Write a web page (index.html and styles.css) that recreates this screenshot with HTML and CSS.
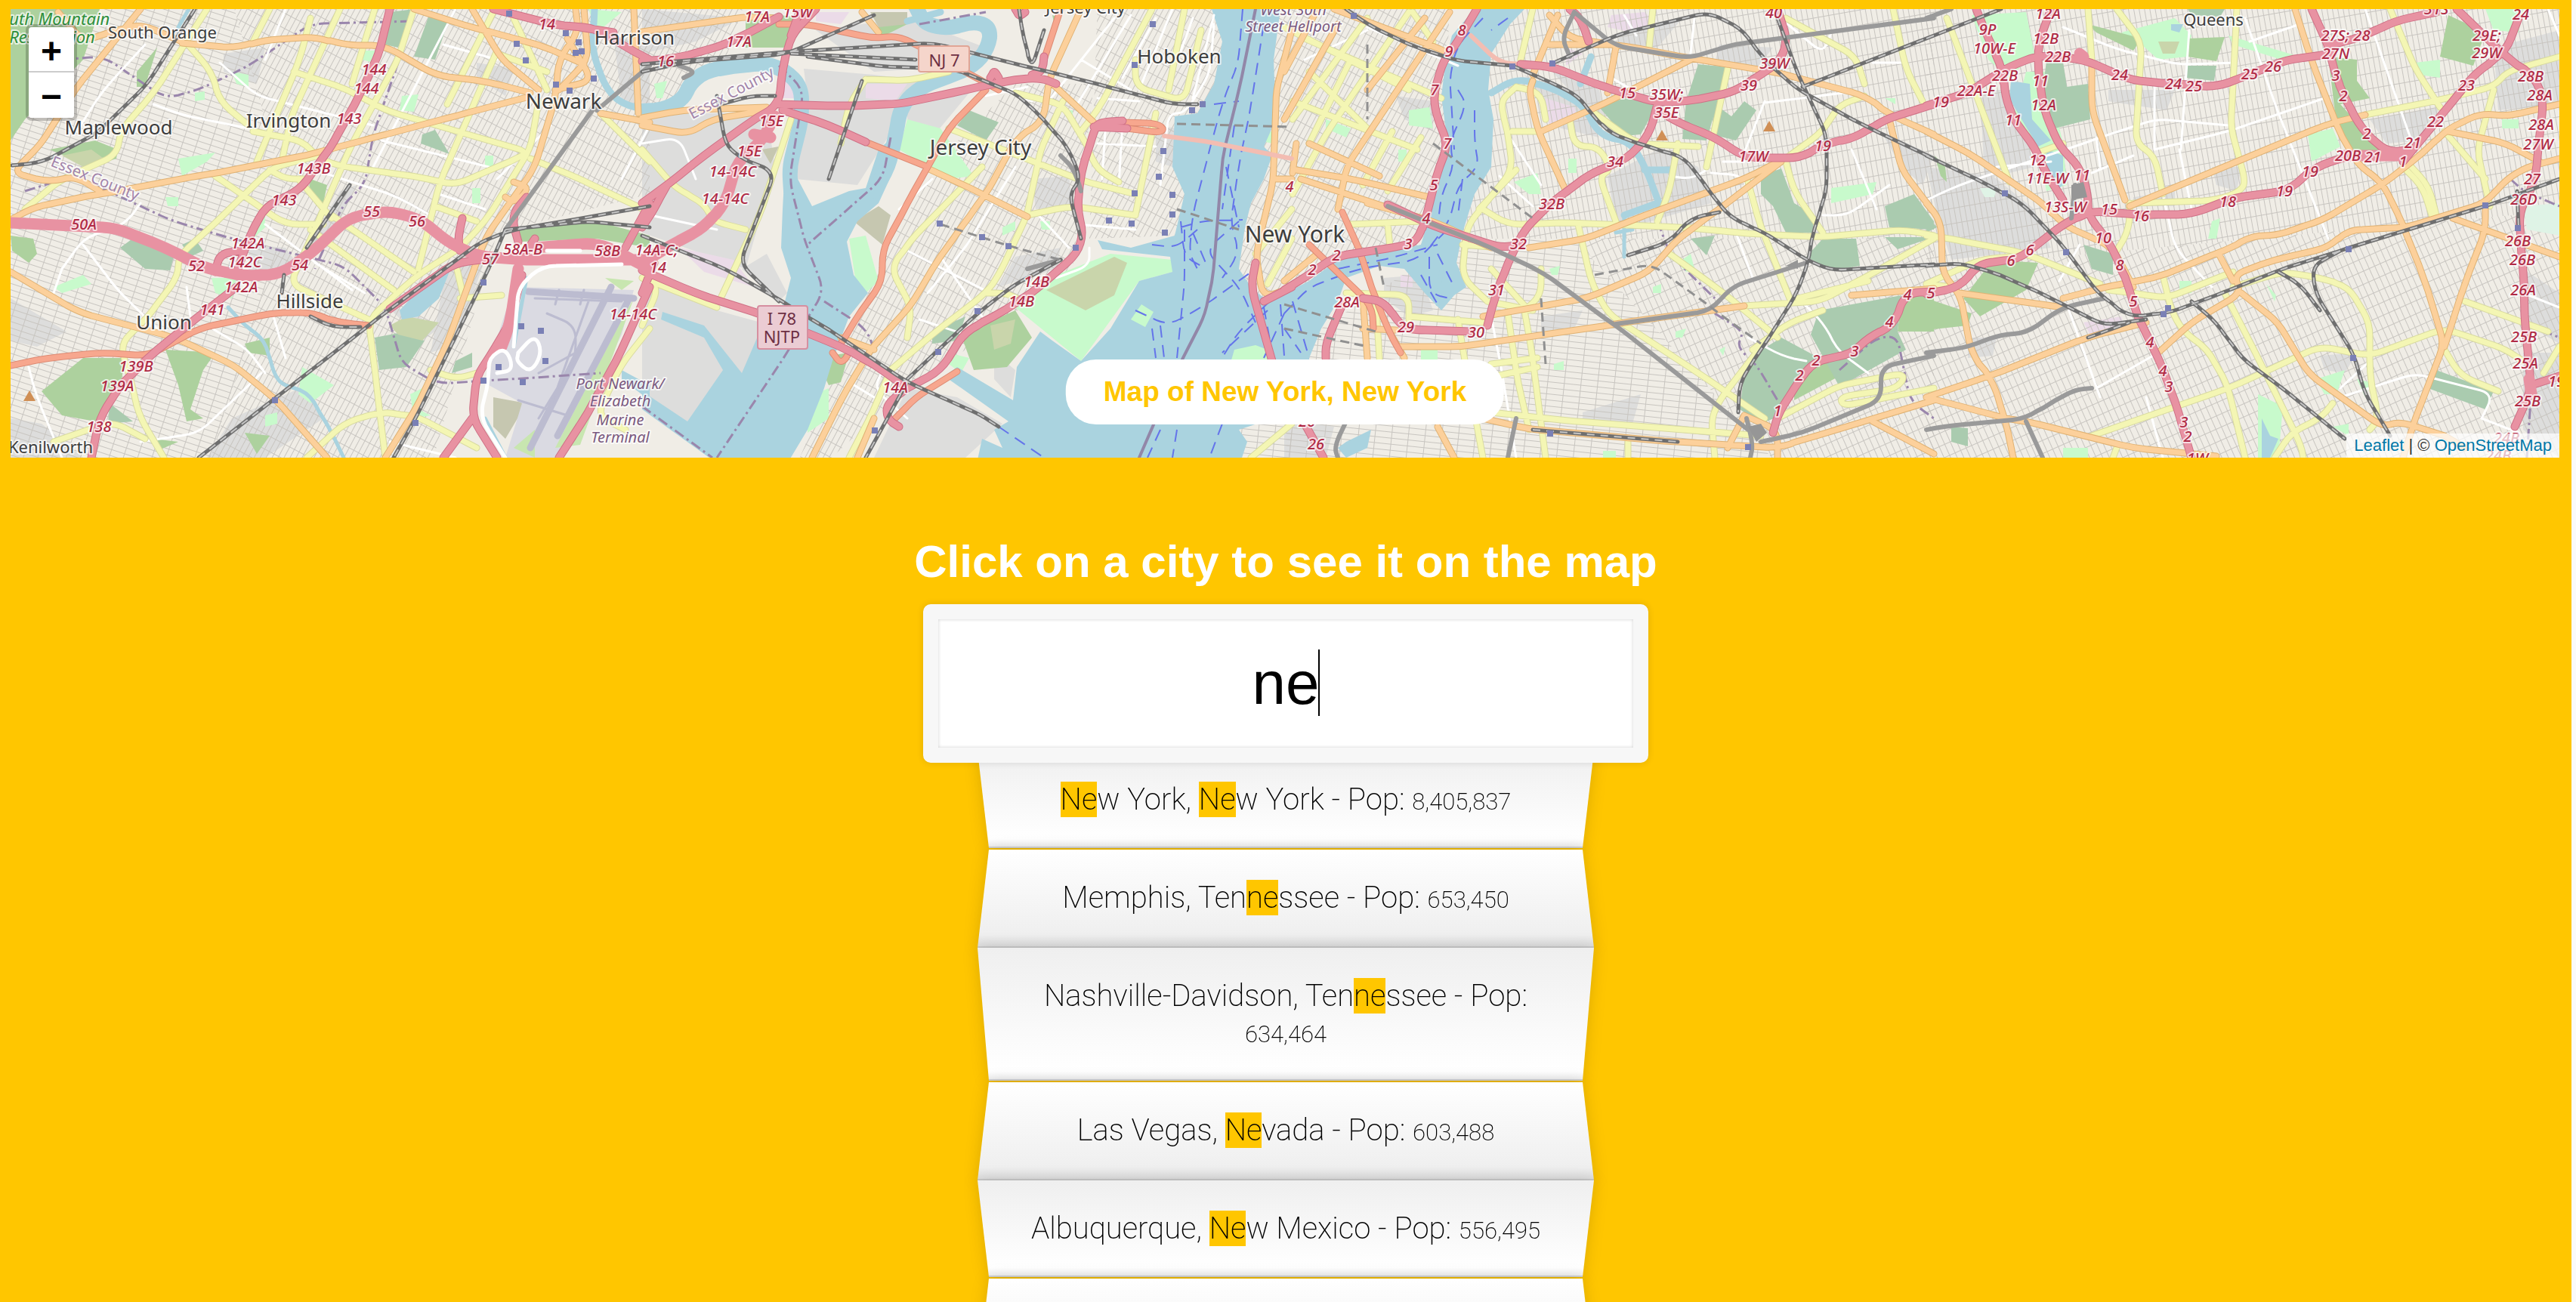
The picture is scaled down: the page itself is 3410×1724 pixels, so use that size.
FILE: index.html
```
<!DOCTYPE html>
<html lang="en">
<head>
<meta charset="utf-8">
<title>City search</title>
<link rel="stylesheet" href="styles.css">
</head>
<body>
<section class="map" aria-label="Map">
  <svg class="map-canvas" viewBox="14 12 3374 594" preserveAspectRatio="xMidYMid slice" aria-hidden="true">
    <defs>
      <pattern id="grid-a" width="18" height="8" patternUnits="userSpaceOnUse" patternTransform="rotate(18)"><path d="M0 0H18M0 0V8" class="street"/></pattern>
      <pattern id="grid-b" width="7" height="18" patternUnits="userSpaceOnUse" patternTransform="rotate(28)"><path d="M0 0H7M0 0V18" class="street"/></pattern>
      <pattern id="grid-c" width="7" height="20" patternUnits="userSpaceOnUse" patternTransform="rotate(-10)"><path d="M0 0H7M0 0V20" class="street"/></pattern>
      <pattern id="grid-d" width="8" height="16" patternUnits="userSpaceOnUse" patternTransform="rotate(-24)"><path d="M0 0H8M0 0V16" class="street"/></pattern>
      <pattern id="grid-e" width="22" height="8" patternUnits="userSpaceOnUse" patternTransform="rotate(6)"><path d="M0 0H22M0 0V8" class="street"/></pattern>
    </defs>
    <g id="map-layers"></g>
  </svg>
  <div class="zoom">
    <button type="button" aria-label="Zoom in">+</button>
    <button type="button" aria-label="Zoom out">−</button>
  </div>
  <p class="map-title">Map of New York, New York</p>
  <p class="attribution"><a href="#leaflet">Leaflet</a> | © <a href="#osm">OpenStreetMap</a></p>
</section>
<main class="search">
  <h1><label for="city">Click on a city to see it on the map</label></h1>
  <div class="field">
    <input id="city" type="text" value="ne" autocomplete="off">
    <span class="caret"></span>
  </div>
  <ul class="suggestions">
    <li><mark>Ne</mark>w York, <mark>Ne</mark>w York - Pop: <span class="pop">8,405,837</span></li>
    <li>Memphis, Ten<mark>ne</mark>ssee - Pop: <span class="pop">653,450</span></li>
    <li>Nashville-Davidson, Ten<mark>ne</mark>ssee - Pop: <span class="pop">634,464</span></li>
    <li>Las Vegas, <mark>Ne</mark>vada - Pop: <span class="pop">603,488</span></li>
    <li>Albuquerque, <mark>Ne</mark>w Mexico - Pop: <span class="pop">556,495</span></li>
    <li></li>
  </ul>
</main>
<script src="map.js"></script>
</body>
</html>
```
FILE: styles.css
```
* { box-sizing: border-box; }
html { background: #fafafa; }
body {
  display: flow-root;
  margin: 0 6px 0 0;
  height: 100vh;
  overflow: hidden;
  background: #ffc600;
  font-family: "Liberation Sans", Arial, sans-serif;
  color: #000;
}
.map {
  position: relative;
  height: 594px;
  margin: 12px 16px 0 14px;
  overflow: hidden;
  background: #e9e6e0;
}
.map-canvas { display: block; width: 100%; height: 100%; }

.zoom {
  position: absolute;
  left: 20px;
  top: 20px;
  display: flex;
  flex-direction: column;
  border: 4px solid rgba(0, 0, 0, .2);
  border-radius: 8px;
  background-clip: padding-box;
}
.zoom button {
  width: 60px;
  height: 60px;
  padding: 4px 0 0;
  border: 0;
  background: #fff;
  color: #000;
  font: bold 48px/56px "Liberation Sans", Arial, sans-serif;
}
.zoom button:first-child { border-bottom: 2px solid #ccc; border-radius: 4px 4px 0 0; }
.zoom button:last-child { border-radius: 0 0 4px 4px; }

.map-title {
  position: absolute;
  left: 50%;
  bottom: 44px;
  transform: translateX(-50%);
  margin: 0;
  padding: 20px 50px;
  border-radius: 40px;
  background: #fff;
  color: #ffc600;
  font-size: 37px;
  line-height: 46px;
  font-weight: bold;
  white-space: nowrap;
}
.attribution {
  position: absolute;
  right: 0;
  bottom: 0;
  margin: 0;
  padding: 0 10px;
  background: rgba(255, 255, 255, .7);
  color: #333;
  font-size: 22px;
  line-height: 32px;
}
.attribution a { color: #0078a8; text-decoration: none; }

.street { fill: none; stroke: #c8c5c0; stroke-width: 2; }
.line { fill: none; stroke-linecap: round; stroke-linejoin: round; }
.label {
  font-family: "Noto Sans", "Open Sans", sans-serif;
  text-anchor: middle;
  paint-order: stroke;
  stroke: rgba(255, 255, 255, .7);
  stroke-width: 4px;
  stroke-linejoin: round;
  fill: #3d3d3d;
}
.label.exit { font-size: 20px; font-style: italic; font-weight: 500; fill: #b02a45; }
.label.capital { font-size: 30px; }
.label.metro { font-size: 28px; }
.label.city { font-size: 26px; }
.label.town { font-size: 22px; }
.label.county { font-size: 20px; fill: #a284aa; }
.label.place { font-size: 20px; font-style: italic; fill: #7b5a80; }
.label.nature { font-size: 22px; font-style: italic; fill: #2f8f3c; }
.label.shield { font-size: 22px; fill: #6d2f43; stroke: none; }

.search {
  display: flex;
  flex-direction: column;
  align-items: center;
}
h1 {
  margin: 102px 0 20px;
  font-size: 60px;
  line-height: 72px;
  font-weight: bold;
  color: #fff;
}
.field {
  position: relative;
  z-index: 2;
  width: 960px;
}
.field input {
  display: block;
  width: 100%;
  height: 210px;
  padding: 40px;
  border: 20px solid #f7f7f7;
  border-radius: 10px;
  background: #fff;
  outline: 0;
  box-shadow: 0 0 10px rgba(0, 0, 0, .12), inset 0 0 4px rgba(0, 0, 0, .19);
  font-family: inherit;
  font-size: 80px;
  text-align: center;
  color: #000;
  caret-color: transparent;
}
.caret {
  position: absolute;
  left: calc(50% + 43px);
  top: 60px;
  width: 2px;
  height: 88px;
  background: #000;
}
.suggestions {
  display: flex;
  flex-direction: column;
  gap: 2px;
  width: 816px;
  margin: -15px 0 0;
  padding: 0;
  list-style: none;
}
.suggestions li {
  position: relative;
  z-index: 0;
  min-height: 128px;
  padding: 40px;
  font-family: Roboto, "Liberation Sans", sans-serif;
  font-size: 40px;
  line-height: 48px;
  font-weight: 200;
  text-align: center;
  filter: drop-shadow(0 0 10px rgba(0, 0, 0, .14));
}
.suggestions li::before {
  content: "";
  position: absolute;
  inset: 0;
  z-index: -1;
  border-bottom: 2px solid #cfcfcf;
  background: linear-gradient(to top, #f0f0f0 0, #fff 10px, #efefef 100%);
  clip-path: polygon(0 0, 100% 0, calc(100% - 15px) 100%, 15px 100%);
}
.suggestions li:nth-child(even)::before {
  bottom: -2px;
  border-bottom-color: #c9c9c9;
  background: linear-gradient(to bottom, #fff 0, #efefef 88%, #dedede 100%);
  clip-path: polygon(15px 0, calc(100% - 15px) 0, 100% 100%, 0 100%);
}
mark { background: #ffc600; color: inherit; }
.pop { font-size: 31px; line-height: 0; }
```
FILE: map.js
```
// The map is digitised on four side-by-side sheets. Each sheet is 1568 units
// square and covers 860 x 620 map units.
const SHEET_X = [0, 850, 1700, 2550];
const UX = 860 / 1568, UY = 620 / 1568;
const out = [];
const toMap = (s, p) => { const [x, y] = p.split(',').map(Number); return [Math.round(SHEET_X[s] + x * UX), Math.round(y * UY)]; };
const points = (s, str) => str.trim().split(/\s+/).map(p => toMap(s, p));

function smooth(pts) {
  let d = 'M' + pts[0];
  for (let i = 1; i < pts.length - 1; i++) {
    const a = pts[i - 1], b = pts[i], c = pts[i + 1];
    const near = (p, q) => { const l = Math.hypot(q[0] - p[0], q[1] - p[1]) || 1, t = Math.min(.5, 18 / l); return [p[0] + (q[0] - p[0]) * t, p[1] + (q[1] - p[1]) * t].map(Math.round); };
    d += 'L' + near(b, a) + 'Q' + b + ' ' + near(b, c);
  }
  return d + 'L' + pts[pts.length - 1];
}
function areas(fill, sheets) {
  sheets.forEach((str, s) => str && str.split('|').forEach(a => out.push(`<path d="M${points(s, a).join('L')}Z" fill="${fill}"/>`)));
}
function lines(styles, sheets) {
  const d = sheets.map((str, s) => str ? str.split('|').map(l => smooth(points(s, l))).join('') : '').join('');
  styles.forEach(([color, width, dash]) => out.push(`<path class="line" d="${d}" stroke="${color}" stroke-width="${width}"${dash ? ` stroke-dasharray="${dash}" style="stroke-linecap:butt"` : ''}/>`));
}

// Land
areas('#f0ede6', ['0,0 1568,0 1568,1568 0,1568', '0,0 1568,0 1568,1568 0,1568', '0,0 1568,0 1568,1568 0,1568', '0,0 1568,0 1568,1568 0,1568']);
areas('#dddddc', [
  '540,180 640,160 620,280 540,240|600,820 690,830 720,890 600,910|1080,880 1170,870 1100,1150 1040,1180|1150,210 1240,230 1220,320 1150,260|560,1400 740,1290 780,1400 640,1532 500,1532|26,1000 160,1110 90,1160 26,1140|820,640 860,620 790,830 740,830|1480,120 1568,150 1568,400 1500,340|26,1400 100,1420 200,1532 26,1532|930,1020 1000,1050 1060,1100 1020,1140',
  '0,940 180,1040 340,1100 240,1260 110,1420 0,1310|390,230 560,250 680,270 520,620 370,600 400,330|0,380 300,380 320,560 250,900 0,780|0,30 240,60 130,140 0,180|420,100 640,60 830,160 780,220 560,240|900,860 1010,830 1000,900 860,960|640,1300 760,1330 870,1420 780,1532 560,1532|940,600 1030,590 1040,690 950,700|300,850 350,980 330,1010 240,900|850,1180 900,1240 890,1330 850,1270|1240,420 1290,430 1280,560 1240,540|640,320 790,310 700,460 640,400|1000,1050 1080,1100 1060,1150',
  '580,250 700,330 760,460 640,420 620,330|780,590 900,500 1000,560 1030,680 860,750 800,740|840,90 960,60 900,160 780,160|240,930 330,920 360,1040 300,1060 240,1000|620,1060 720,1040 700,1100 620,1110|720,1380 860,1320 840,1420 720,1420|0,1400 120,1430 100,1532 0,1532|640,230 760,300 780,440|270,320 360,340 360,440 290,400|1050,150 1180,160 1140,230 1040,210|1440,440 1568,520 1540,620 1490,560',
  '130,300 210,300 260,560 140,600|0,560 160,590 260,700 300,830 60,870 30,740|440,300 600,300 580,370 440,340|1070,400 1240,360 1200,470 1110,480|1370,160 1528,100 1528,350 1380,370|1440,900 1528,980 1528,1150 1440,1080|690,560 760,560 750,640 700,620|500,660 600,640 600,690 500,690|950,1190 1040,1180 1010,1250 960,1240|1440,1180 1528,1180 1528,1532 1440,1440|100,1130 170,1130 160,1190 100,1200'
]);
areas('#ebdbe8', ['', '540,280 640,280 610,340 540,330|90,830 220,870 270,960 150,910|420,40 500,40 480,80 420,70|340,260 380,280 370,330 340,330', '790,50 870,40 900,80 840,110 780,90|630,330 700,360 710,400 640,420|280,920 310,920 310,960 280,960|680,160 720,180 680,220', '380,1080 470,1060 480,1100 400,1130']);

// Residential street grids
areas('url(#grid-a)', ['0,0 560,0 700,700 500,1568 0,1568', '', '', '']);
areas('url(#grid-b)', ['560,0 1568,0 1568,650 1200,780 1040,1568 500,1568 700,700', '0,0 250,0 200,200 0,420|1100,0 1568,0 1568,1100 1290,790 1080,800|900,280 1090,280 1040,900 560,1400 430,1568 370,1568 600,800 740,500', '0,0 400,0 380,800 0,1000', '']);
areas('url(#grid-c)', ['', '', '450,0 1568,0 1568,800 420,800', '0,0 1568,0 1568,700 0,900']);
areas('url(#grid-d)', ['', '', '700,800 1568,800 1568,1568 1200,1568', '0,900 1568,700 1568,1568 0,1568']);
areas('url(#grid-e)', ['', '1440,1420 1568,1400 1568,1568 1450,1568', '0,1180 420,800 700,800 1200,1568 0,1568', '']);

// Parks, woods and cemeteries
areas('#c8facc', [
  '560,240 600,250 600,290 570,280|470,310 495,305 495,335 470,340|880,170 905,170 900,210 875,200|970,320 1010,315 1000,375 965,370|640,1390 670,1380 670,1420 640,1430|730,1230 805,1290 750,1350 720,1320|1170,520 1190,520 1190,560 1170,560|1140,630 1160,630 1160,680 1140,680|400,660 430,660 430,690 405,690|430,530 520,510 500,540 440,590|600,780 640,700 640,760 610,800|510,930 570,930 560,1000 520,980|130,960 200,920 220,950 150,980|990,1320 1020,1300 1010,1370 1040,1390 1000,1400|1420,30 1500,40 1440,110',
  '640,400 720,430 800,590 740,600 620,500|1000,920 1130,850 1280,870 1280,910 1200,940 1060,1210 900,1030|500,800 540,790 570,940 540,980 515,930|960,740 985,740 985,770 965,770|400,1330 450,1300 450,1400 400,1450|1020,370 1040,370 1040,400|740,1180 790,1200 770,1250 740,1220|1490,440 1520,440 1520,480 1490,470|870,760 900,740 900,770 870,790|30,280 60,270 50,330 35,330',
  '100,400 160,430 150,460 100,430|300,370 350,360 360,430 300,420|685,530 705,530 705,580 685,580|555,610 610,580 620,650 590,650|1320,630 1430,610 1420,650 1320,680|890,960 910,950 910,980 890,980|945,1110 970,1100 960,1130 945,1130|330,1170 370,1170 370,1205 330,1205|650,1220 675,1210 675,1240 650,1240|950,880 980,850 990,900 970,910|640,900 665,890 660,920 645,920|770,1510 800,1510 800,1532 770,1532|1450,330 1475,330 1475,350|275,500 295,500 295,540 275,540|1050,1170 1065,1160 1060,1190',
  '110,50 240,40 260,180 200,260 150,200|240,240 290,240 330,480 340,620 290,640 270,500 210,400|470,110 600,60 640,120 630,190 560,200 520,150|920,450 980,430 1000,490 930,540|940,1270 1010,1240 990,1320 960,1320|1180,210 1240,200 1240,260 1190,250|1350,30 1440,30 1430,110 1370,100|730,120 900,190 880,210 740,150|800,1320 860,1360 850,1532 800,1532|690,740 710,730 700,800 680,800|820,950 845,990 840,1010|1040,1270 1070,1280 1060,1330|610,940 640,940 640,980 610,980|1390,400 1430,400 1430,430 1390,430|330,1500 390,1500 390,1532 330,1532|980,1430 1020,1420 1020,1460'
]);
areas('#add19e', [
  '26,30 240,30 200,200 130,300 60,400 26,470|120,500 230,470 285,500 280,530 220,560|100,1310 200,1200 300,1200 290,1310 230,1410 150,1390|400,1170 520,1180 490,1240 460,1370 490,1400 450,1410 430,1290|590,1150 650,1130 650,1190 600,1180|330,240 380,160 350,290 330,290|26,790 80,800 90,850 70,880 30,840|370,1470 430,1480 380,1510|590,1450 650,1460 620,1520|750,600 790,620 780,680 745,640|1250,770 1440,740 1568,790 1568,830 1440,800 1260,810',
  '250,40 410,60 350,160 250,160|770,1120 900,1040 940,1130 880,1230 800,1240|570,60 640,80 570,130|420,1200 500,1180 480,1280 450,1290|990,50 1010,60 1000,110',
  '1490,1000 1568,980 1568,1110 1480,1110|1230,1220 1340,1200 1340,1260 1230,1340',
  '970,190 1040,200 1040,270 1070,330 1000,350 1060,440 1120,500 1080,530 1010,490 990,420|630,130 720,125 700,205 630,190|1260,50 1350,110 1320,220 1240,190|160,870 270,880 240,970 130,1060 90,1000|0,1000 110,1050 100,1090 0,1105|20,520 45,560 50,610 35,590|390,80 520,130 500,170 410,110'
]);
areas('#aacbaf', [
  '940,40 1000,30 960,160 930,150|1035,50 1085,60 1050,200 1000,190|1020,450 1050,435 1085,515 1015,480|290,830 330,790 420,860 410,905 350,900|905,1130 960,1115 1025,1140 980,1230 915,1240|440,820 470,800 490,840 460,860|1100,1210 1140,1180 1140,1230 1090,1250|265,1350 320,1410 260,1420',
  '790,370 860,410 830,470 760,420|700,1110 780,1060 760,1140 700,1150',
  '760,360 820,330 900,350 860,450 820,455|1000,215 1070,225 1020,470 960,465 970,340|1040,350 1080,390 1110,340 1140,370 1090,470 1030,450|1150,590 1200,565 1230,680 1280,720 1275,780 1210,780 1180,690 1150,650|1300,800 1380,800 1390,890 1320,905 1260,860|980,800 1040,790 1020,855|1450,690 1520,650 1568,740 1568,770 1460,760|1450,795 1568,795 1480,835|1290,1040 1490,990 1480,1110 1500,1170 1340,1295 1270,1120|1130,1190 1200,1130 1290,1200 1200,1390 1150,1420 1100,1370 1110,1250',
  '290,205 330,210 340,290 390,280 395,400 310,430 280,300|630,220 700,220 695,270 625,260|380,820 450,850 450,920 400,900|1230,1240 1370,1310 1350,1370 1210,1300|60,1430 100,1435 100,1495 60,1480|0,720 25,760 0,780|630,30 720,30 710,55 640,50'
]);
areas('#c9d5ab', ['940,1090 980,1060 1060,1080 1020,1140 960,1120|150,520 220,500 260,540 200,560', '975,970 1140,860 1170,880 1140,990 1070,1040|840,1090 900,1070 890,1150 850,1170', '', '560,140 610,140 600,180 570,180']);
areas('#c6c7b0', ['1190,1330 1270,1350 1220,1470 1190,1430', '510,740 570,690 600,720 580,820|550,40 640,40 640,80 570,90|290,500 330,490 310,550', '', '']);

// Newark airport
areas('#dadae2', ['1240,960 1530,970 1500,1120 1350,1532 1220,1532 1260,1350 1180,1290 1190,1170', '', '', '']);
areas('#c8e6b0', ['1460,930 1530,940 1500,970|1500,1070 1530,1000 1400,1490 1340,1500|1240,1500 1290,1440 1290,1532', '', '', '']);
lines([['#bcbcd0', 9]], ['1275,975 1530,1000|1475,960 1280,1500|1515,1010 1345,1460', '', '', '']);
lines([['#bcbcd0', 3]], ['1290,1000 1500,1010|1320,1050 1390,1090 1390,1200 1300,1400|1420,1010 1330,1360|1350,970 1340,1020|1410,970 1400,1020|1250,1340 1370,1390|1300,1250 1390,1180', '', '', '']);

// Water
areas('#aad3df', [
  '965,1040 1030,940 1090,890 1060,1000 1010,1060 970,1070|1500,1240 1568,1290 1568,1340 1500,1270',
  '345,560 340,700 335,830 360,930 345,1010 280,1120 240,1250 185,1150 150,1090 50,1045 45,1070 150,1130 195,1240 110,1410 0,1310 0,1370 170,1540 355,1540 400,1440 440,1300 460,1210 500,1060 545,980 510,920 495,810 520,740 570,680 610,560 620,440 570,500 540,630 500,640 410,690 375,600|1375,30 1400,140 1380,280 1340,380 1285,390 1280,560 1310,650 1285,790 1180,830 1100,805 1110,835 1275,860 1280,910 1200,940 1130,1100 1060,1210 990,1140 960,1110 905,1230 895,1340 760,1230 730,1260 885,1410 850,1440 870,1500 820,1470 810,1540 1445,1540 1460,1480 1440,1440 1568,1380 1568,960 1510,1010 1470,960 1440,900 1455,760 1470,680 1500,600 1520,520 1500,490 1530,400 1525,200 1540,30',
  '0,985 60,940 130,870 230,850 330,820 355,700 372,600 395,490 385,380 380,320 390,200 405,120 460,30 580,30 545,80 500,180 492,300 505,400 500,560 460,650 430,780 415,880 440,960 410,990 380,1040 340,980 290,900 230,890 150,930 130,1010 90,1100 60,1200 60,1230 0,1230|150,1480 210,1440 200,1500 150,1532 130,1500',
  '205,270 250,280 255,400 300,470 270,490 230,400 200,330|290,500 330,520 330,620 310,640 290,560|810,1400 830,1460 850,1470 830,1532 810,1532|590,80 620,80 610,110 590,100'
]);
lines([['#aad3df', 20]], ['', '0,372 60,365 100,330 115,280 150,240 220,220 300,212 345,235 385,290 385,400 370,480 355,560 360,640|660,20 680,80 740,95 800,70 840,90 835,160 800,220 740,255 680,285 640,330 620,380 610,460 595,560 560,640', '', '']);
lines([['#aad3df', 9]], ['1435,30 1430,170 1460,290 1500,350 1568,370', '640,70 720,40', '500,310 560,262 640,290 720,350 760,450 840,480 880,590 910,700|820,720 900,680|870,570 930,570|740,190 715,280', '']);
lines([['#aad3df', 5]], ['455,30 430,90|550,1030 590,1090 640,1140 660,1250 680,1290 740,1310 790,1420 830,1532|1270,930 1240,1160|1170,1400 1220,1532', '', '820,720 820,860|800,780 840,770|380,900 370,1020', '']);
areas('#c8facc', ['', '1420,1215 1430,1170 1480,1155 1510,1170 1520,1215|1180,1070 1205,1020 1235,1045 1215,1095', '', '']);
areas('#dff3e6', ['', '', '', '1440,690 1530,680 1530,790 1450,770|130,630 170,630 165,660 140,660']);

// Ferries and boundaries
lines([['#6474ea', 2, '16 10']], ['',
  '1450,30 1440,200 1400,350 1370,500 1330,720 1320,850 1340,900|1500,80 1470,350 1440,560 1420,740 1440,850 1400,930|1380,350 1440,340|1300,760 1350,740 1450,735|1230,820 1290,830 1340,770|1310,770 1310,950 1290,1200|1440,740 1360,840 1440,960 1480,1080|1550,960 1440,1110 1380,1240 1330,1400|1190,1040 1270,1090 1350,1030 1480,900|1230,1100 1240,1200|1250,1090 1260,1200|1550,1050 1500,1200|1510,1040 1400,1180|1250,1440 1220,1532|1400,1420 1370,1532|1290,1440 1280,1532|860,1430 970,1532|1330,780 1360,880|1300,740 1310,860 1350,890|1500,1030 1520,1180|1540,1020 1550,1190|1430,420 1400,700|1410,560 1440,760',
  '480,60 420,150 400,250 410,500|540,60 500,100|420,300 440,350 400,480 410,560 380,650 370,760|460,370 460,480 470,560 420,620 400,740 350,830|430,600 420,720|0,1050 60,960 180,900 320,870 400,760|130,900 270,860 370,820|20,1010 60,1200|0,1100 40,1180|350,860 350,980 400,1000|370,850 410,960|330,920 370,1020',
  '']);
lines([['#9a86ac', 3, '14 5 3 5']], [
  '150,200 250,190 400,330 480,300 600,220 750,80 1000,70|960,210 900,450 880,620 830,680 760,900|60,640 180,590 420,740 560,800 830,890 930,1030 970,1220 1060,1285 1230,1270 1450,1250',
  '330,220 390,300 355,600 390,800 440,970 350,1180 180,1532|600,460 580,600 400,820|440,1010 540,1100 560,1170|0,1360 170,1532|670,80 830,40',
  '1040,1050 1110,1110 1090,1160 1140,1220 1190,1340|1340,1240 1430,1130 1480,1125 1510,1340 1568,1400|900,740 930,850 1040,1000',
  '1410,600 1440,640 1528,690|1440,1080 1528,1130|1460,1300 1450,1532']);
lines([['#9287a8', 4]], ['', '1480,30 1440,300 1400,530 1380,900 1360,1050 1290,1240 1200,1532', '', '']);

// Roads, minor to major
lines([['#ffffff', 3]], [
  '350,150 250,300 190,430|370,350 450,390 600,430|530,210 620,320 900,420|150,900 200,800 300,750 340,680|200,820 290,980 380,1100|1070,150 1200,200|1100,30 900,560|130,980 150,900|450,960 460,1060|690,30 640,200|1060,650 1170,700|920,470 1180,560|640,750 850,970|780,580 960,660 1040,720|1330,420 1200,600|500,1090 600,1170 640,1250|70,1230 90,1330 150,1532|340,1480 480,1450 630,1250|660,1060 690,1200|940,1480 1100,1532|760,880 880,980|1568,420 1500,600',
  '20,720 180,770|0,480 90,460 130,600|870,300 940,340|620,700 700,600|640,840 840,980|720,860 820,1060|670,1070 780,1120|830,650 700,900|900,560 780,830 690,980|1060,200 1180,300|1100,330 1200,340|1140,60 980,340|1280,30 1200,300|1380,80 1370,250 1310,380 1270,380 1250,620|1050,750 1190,770|1080,830 1080,890 1000,930|950,710 1030,830|580,1240 560,1300 640,1400|500,1280 560,1330|830,320 930,290|1240,60 1160,260|1180,50 1050,350|1100,480 1240,490|1330,60 1270,280|1380,50 1330,330|1120,400 1110,600|1160,410 1150,620',
  '820,50 850,120|990,60 980,180|520,590 600,690|540,450 620,620|790,260 900,350|1160,340 1110,510|1160,345 1350,310|1060,540 1110,540|1030,580 1110,590 1130,700|1300,720 1360,720 1460,620|930,590 980,600 1020,570|1090,780 1130,930|1240,1000 1300,1080 1340,1180 1410,1250|1120,1130 1200,1190 1260,1210|1180,40 1300,180 1320,110|1420,210 1500,210|500,1060 520,1200 560,1532|50,200 200,100|200,90 420,220|1370,500 1430,700',
  '330,90 450,160 600,215 750,210|635,100 615,500|770,60 850,380 970,800|1060,30 1170,470|780,140 900,80|0,670 80,620 400,470 550,400 730,420|550,500 730,440 960,330|410,460 420,560|550,290 550,500|570,650 600,830 690,960|340,1020 420,1330|170,560 300,540|410,1300 560,1180|400,580 500,520|1000,1330 1180,1250 1370,1320 1340,1400|610,500 640,700|530,1330 570,1532|1440,980 1528,1030|1340,1400 1430,1450|320,940 370,820|1000,1300 1070,1210|1500,30 1528,120']);
lines([['#d9dba0', 9], ['#f4f6b4', 7]], [
  '500,30 370,310 290,440 280,520 150,600 60,700|450,145 510,240 530,340 600,420|650,30 610,140|750,60 720,210 620,540|820,30 700,400 680,540|905,30 850,280|1000,30 960,200 850,480 780,700 740,830|710,240 840,300 930,370 1080,430 1280,510 1200,560 1100,620 1000,590 830,560 770,530 730,470 610,440|1200,170 1060,620 1010,900|1300,340 1280,500 1170,740 1110,830|1280,530 1400,600 1568,710|1450,380 1568,540|520,590 690,750 780,750|750,770 950,970|800,720 1000,910|720,600 800,730|650,570 690,600 740,600|520,745 660,560 770,520|520,745 430,860 430,920 360,1060 290,1150 310,1250 340,1400 395,1532|1100,840 1000,930 890,1070 910,1300 930,1532|1110,1000 1210,990|740,1532 830,1420 910,1380 1000,1390 1150,1500|130,1480 270,1410 350,1470|740,830 700,950 890,1070|1040,1240 1100,1270 1150,1250|1190,40 1080,350|1200,180 1320,240|1240,60 1320,300|1568,1100 1500,1220 1440,1390 1510,1440|1100,880 1120,1000|1050,690 1150,740',
  '0,500 80,630 150,680 170,740 250,770|360,400 280,730 190,1000|820,560 650,800 600,900 650,1030 640,1130|740,430 1050,600 1190,650|1015,340 960,500 930,720 860,920 830,980 700,1120 600,1240|930,720 1030,690 1190,720|1230,30 1100,370 1060,440|830,980 880,980 920,1010|0,930 180,1030|1075,500 1100,570 1150,610|540,265 500,350 480,480|540,265 640,270 740,240|1310,30 1270,300|1350,100 1310,340 1190,290 1190,200|500,1532 560,1370 600,1240|1240,380 1190,720|900,310 1015,350 1080,500|1568,700 1480,850|1568,800 1510,950|1470,1532 1568,1420|0,930 40,960 0,1090',
  '0,90 300,300|60,240 200,430|50,130 380,330|20,340 320,500|300,40 100,450 20,650|200,60 20,400|160,200 60,480|330,460 250,640|260,440 190,620|310,40 360,140|160,750 330,740|250,750 255,830|560,290 520,340 540,440 550,570 440,760 430,930 490,1010|550,440 610,440|560,290 620,310 630,400|600,30 570,200|560,570 470,700|690,400 700,490 760,490 790,570 760,590 800,740|750,380 850,480 1000,490|1070,230 1020,560|480,700 540,750 700,745 950,760 1150,785 1300,795 1490,770 1568,790|710,750 740,940 780,1050 1000,1250 1160,1400|900,740 930,640 950,480|930,850 1050,970 1190,1130|1120,610 1150,760 1220,1000|1210,540 1230,640 1300,780|1200,540 1300,440 1340,350 1400,320|1110,1025 1290,1010 1400,930 1568,800|1240,1000 1410,940|500,900 590,1040|430,820 520,830|490,1010 600,1040|620,900 620,990 580,1040|580,1040 600,1200 630,1532|540,1050 560,1250 590,1440|300,1060 480,1080|150,980 300,990 300,1070|420,1070 430,1160 480,1532|500,1220 610,1200|510,1260 610,1230|500,1380 700,1410 1150,1460|1150,1160 1050,1340 1030,1400 1040,1532|1210,60 1380,190 1400,280|1470,30 1500,230 1540,340|890,30 880,160|1130,1170 1220,1080 1300,1040|1190,1400 1340,1290 1500,1250 1480,1300 1340,1330 1350,1360 1568,1300|830,1480 830,1532|220,1000 230,1200',
  '50,60 200,610|390,30 400,200|460,30 520,140 505,480 550,520 570,650|750,30 735,430 770,600 760,640 700,670 500,680|1060,385 1240,335 1370,290 1400,240 1528,190|1120,30 1180,230 1240,360|1370,300 1330,500 1360,690|1250,440 1350,600|0,790 60,800 240,850 420,950|0,950 130,870 200,860|490,680 490,760 460,840|1150,560 1200,630 1220,720|1170,560 1210,620 1230,720|440,970 500,980 580,1000 740,910|570,920 590,1040 620,1110 680,1170 730,1300 770,1532|720,980 800,1200 900,1480 910,1532|740,960 860,910 950,930 1020,960 1070,1080 1070,1250 1090,1400 1070,1440|400,1460 730,1300 950,1160 1070,1190 1250,1100 1400,1170 1440,1210|1300,1010 1500,1110|1250,1170 1290,1260 1380,1310|980,1350 950,1400 880,1450 840,1532|270,510 330,480|1528,1160 1490,1250|0,950 60,960|460,1500 450,1532']);
lines([['#e0b273', 9], ['#fcd09b', 7]], [
  '340,30 180,300 100,480 30,580 120,610 180,590 240,640|26,735 90,690 240,650 500,585 740,520 900,460 1100,390 1270,325|440,145 570,160 640,135 760,125 830,150 930,155 1050,250 1180,275 1280,310|26,910 190,1045 420,1130 560,1220 660,1330 790,1532|1000,30 1150,95 1300,150 1410,215|1140,30 1210,200 1300,300|1390,30 1395,110 1350,200 1340,330 1290,560 1170,800 1080,1150 1000,1380 930,1532|1370,130 1430,270 1340,300|1410,30 1420,200 1350,300|1450,380 1568,410|140,40 200,140 260,110 340,80 440,140|1240,610 1280,630 1240,680 1220,660|1530,30 1540,380',
  '0,105 250,55 330,60|690,565 820,650 930,725|1060,30 980,270 970,400 900,470 830,650 770,760 700,900 650,1020 550,1170 480,1340 410,1532|0,395 100,370 300,360|0,420 110,450 170,400 300,370|990,280 1090,410|530,40 570,110|1568,100 1530,300 1525,600 1480,860 1500,1000 1568,960|1525,600 1568,600|560,1400 520,1532|480,1130 560,1170',
  '120,30 350,150 400,180|80,30 0,240|130,80 0,400|340,60 200,300|400,40 150,560 130,700|600,270 590,300 610,430 680,640|640,50 690,130 820,155 980,195 1200,245 1400,320 1470,390 1568,450|800,160 780,310|980,200 770,350 620,440|1200,535 1110,600 870,720 730,800 590,830|1200,540 1050,700 950,800 880,910 730,1000 480,1060|1110,1025 800,1085 430,1160 280,1160|30,570 160,600 350,660|60,480 230,590|40,600 350,740|30,480 20,580|200,680 360,740 500,830|250,1100 290,1200|1460,400 1490,570 1568,710|1370,990 1568,965|1568,1340 1260,1470 1190,1500 950,1480 600,1440 480,1400|1420,1410 1568,1520|190,1000 200,1200|190,1100 270,1105|370,1430 410,1532|1110,1390 1070,1500|660,50 600,250|1110,1390 1190,1440 1190,1532|0,940 80,850|640,150 790,150',
  '400,210 400,370 480,670|0,440 100,510 280,680 330,750 450,830 500,960|0,1330 150,1260 390,1130 530,1080|490,690 750,540 960,420 1060,385|330,1000 430,960 550,930 720,840 790,790 840,790 950,740 1100,620 1200,510 1260,430 1340,380 1400,390 1528,350|890,30 930,200 990,420 1040,550 1100,610 1150,750 1200,930 1250,1150 1180,1400 1150,1532|560,1180 640,1080 760,980 740,920 840,870 970,830 1020,770 1150,765 1350,680 1400,600 1450,560 1528,530|1260,440 1400,480 1480,540|760,980 850,1080 920,1250 1100,1430 1140,1410 1250,1460|1350,690 1350,770 1300,950 1250,1160|1270,730 1528,860|0,680 35,740 40,920 80,980 110,1180 160,1280 190,1400 210,1532|80,980 330,1030|0,1330 190,1400 240,1410 500,1500 700,1528|705,850 740,940|1250,1460 1300,1500']);
lines([['#dd8b74', 9], ['#f7a78e', 7]], [
  '26,1225 120,1200 240,1180 360,1190 480,1100 650,1050 740,1045 820,1080 890,1090',
  '330,80 400,80 560,130 620,120 700,180 860,300|1010,30 970,200|830,300 740,430 690,560 640,680 580,840 580,940 510,1080 480,1150|540,475 690,560|1160,410 1250,415 1260,445 1170,430|760,1245 660,1330 610,1400|460,1180 480,1220 500,1180',
  '140,710 180,830 210,960 250,1100 280,1180|60,820 210,1020 215,1100', '']);
lines([['#f3bdb2', 6]], ['', '1260,455 1390,480 1568,530', '450,120 520,210 570,215', '']);
lines([['#cf7186', 11], ['#e892a2', 9]], [
  '940,30 915,180 870,310 800,490 720,640 640,690 600,800 575,900|570,960 480,1060 380,1170 290,1290 240,1400 220,1532|1250,880 1290,800|1260,920 1230,1080 1180,1200 1150,1260 1140,1400 1200,1532|1140,1400 1070,1532|1568,960 1500,1170 1420,1380 1350,1532|1190,30 1330,80 1440,95 1500,150 1568,200|1568,680 1510,830|1270,660 1235,720 1250,810|1115,730 1105,800 1110,840|940,1035 1100,880 1160,870|580,840 530,850 520,910|1400,90 1480,110',
  '0,205 80,195 180,160 260,110 330,55|420,30 360,120 340,230 330,350 250,420 150,520 60,620 0,680|380,40 360,120|330,350 480,355 620,350 780,300 900,265 960,260 1000,280|970,190 965,240 940,250|840,260 850,235 860,260|340,370 450,420 540,475|0,905 130,980 300,1060 480,1160 560,1220 640,1300|640,1300 720,1240 780,1110 850,1060 940,980 1050,850 1065,780 1050,700 1060,580 1090,440 1100,410 1160,405|640,1300 590,1350 590,1400 620,1430|1090,425 1170,430|60,620 30,700 0,760|30,880 0,980|1480,880 1470,960 1520,1210|1568,960 1500,1010|900,30 910,55 925,40',
  '465,30 420,140 385,200 360,320 370,400 395,480 365,600 345,720 320,810 280,825 120,860 60,920 0,970|690,30 715,60 735,140|570,215 650,225 750,280 820,310 900,345 970,340 1080,310 1150,250 1200,200 1215,130 1190,30|900,350 880,450 830,530 750,575 650,670 580,770 540,880 510,990 490,1090|900,370 950,410 1040,460 1110,525 1240,530 1310,480 1380,460 1450,400 1568,350|250,685 350,750 520,830 570,820|190,1000 240,1010 280,1090 310,1105 450,1110|140,1020 100,1150 100,1200|1568,975 1500,980 1470,1090 1410,1130 1370,1185 1280,1210 1240,1280 1190,1390 1180,1450|50,1420 95,1532',
  '120,30 150,130 185,230 190,320 210,400 260,490 280,560 330,670|300,30 270,150 270,240 285,370 320,490 370,560 390,650 390,720 430,790 460,860 490,970 510,1060|0,355 100,310 190,230 270,185 380,200 500,270 600,280 700,290 760,260 870,200 980,180|930,30 970,150 985,240 1010,330 1050,430 1110,510 1170,500|0,985 80,960 130,880 220,870 330,750 400,705 520,720 640,715 750,660 870,640 940,560 1020,520 1150,520|1150,540 1240,390 1330,240 1400,170 1430,60|1280,30 1400,190 1470,260 1490,340 1480,450 1470,600 1430,720 1440,900 1445,1100 1460,1300 1420,1430|980,150 1060,120 1130,70 1230,40|1460,1290 1528,1260|510,1060 560,1200 600,1340 640,1532']);
lines([['#e892a2', 15]], [
  '26,745 280,765 400,830 500,900 600,925 680,915 750,850 840,730 930,705 1010,730 1090,820 1160,860 1270,870|1290,830 1440,815 1500,850 1568,900|1270,870 1568,870|1250,900 1230,1080 1210,1160',
  '320,390 290,470 230,540 200,680 150,760 60,830 0,870|0,880 60,830|270,450 310,460', '', '1010,520 1150,520|370,180 380,190|1455,1270 1460,1320']);
lines([['#ffffff', 5]], ['1220,1532 1160,1400 1180,1260 1180,1200 1220,1160 1240,1240 1200,1250|1250,1180 1290,1120 1310,1180 1280,1250 1245,1210 1250,1180|1240,1160 1250,960 1310,890 1500,885|1320,840 1400,840', '', '', '']);

// Railways
lines([['#9a9a9a', 6]], [
  '1568,220 1440,370|1440,350 1220,770',
  '1010,520 1040,560 1060,640|90,220 130,240 100,260|930,900 1010,870', 
  '700,40 800,155 980,195 1080,150 1568,60|700,40 670,130 690,190|250,690 500,830 620,910 800,1090 1120,1440|800,1085 1030,1040 1080,960 1260,880|1150,1480 1250,1450 1440,1340 1440,1230 1568,1190|1115,1400 1130,1480 1125,1532|150,1410 120,1500 130,1532|560,1400 540,1532',
  '0,1180 90,1165 180,1120 240,1115 330,1030 430,1000|0,1440 40,1430 240,1400 310,1340 360,1305 400,1300|240,1410 280,1532|0,60 60,30|360,620 350,730']);
areas('#969696', ['', '', '1120,1430 1150,1420 1165,1450 1140,1480|1210,890 1240,870 1240,900', '350,620 380,610 388,660 350,670']);
lines([['#6f6f6f', 5], ['#c4c4c4', 2, '10 8']], [
  '470,30 350,290 230,450 100,545 30,555|480,1532 890,1090 1160,810 1240,770 1360,740 1568,690|1220,770 1180,900 1000,1410 950,1532|845,620 740,830|1220,770 1420,740 1568,760|750,1060 800,1095 870,1095|685,920 680,980',
  '0,240 100,210 350,180 560,50|0,215 400,170 700,145 950,230 1100,280 1280,350 1340,350|360,180 660,200|400,190 600,225 750,230 900,310 970,400 1030,500 1060,600 1030,650 1060,800|0,790 200,900 340,1010 480,1130 640,1280 820,1390 860,1430|640,1270 810,1050 900,950 1010,870|190,350 260,320 320,320|180,320 200,480 230,520 320,580 235,880 330,1010|530,270 450,600|910,30 920,130 940,230 970,100|640,1280 540,1532',
  '150,30 200,80 300,150 420,205 550,220|550,220 650,280 710,320 740,380 790,450 880,490 970,530 1030,650 1080,730 1160,780 1260,870 1320,905 1568,885|650,210 800,120 1020,40 1100,90 1160,200 1240,300 1400,420 1568,530|1250,290 1568,120|1190,60 1240,250 1310,450 1310,640 1280,760 1260,900 1230,1000 1150,1170 1100,1280 1095,1380|830,855 930,810 980,730 1050,710|600,1440 950,1480',
  '0,130 180,30|0,520 150,620 230,680 320,810 420,990 490,1060 580,1050 700,990 840,910 1020,830 1350,690 1528,600|0,890 80,880 180,920 300,1000 430,1090 530,1070|640,1010 700,1080 760,1200 850,1290 1010,1470|1000,840 930,890 940,990 1030,1180 1060,1320 1120,1460|850,910 900,950 950,1040|390,1130 490,1080|1425,640 1430,760']);
lines([['#909090', 3, '12 7']], ['',
  '720,750 890,825 1010,870|1290,415 1568,425|1290,700 1440,770',
  '200,150 200,400|360,480 600,730|750,920 890,885 1040,1040 1150,1150|620,1000 630,1220|0,1020 220,1110|0,1100 200,1160|220,830 240,960', '']);

// Stations and peaks
const stations = [
  '1229,45 1247,147 1269,202 1365,112 1397,142 1390,178 1404,172 1433,264 1342,283 1375,303 1167,945 1258,1092 1305,1107 1316,1209 1203,1228 1167,1274 1261,1280 664,1340 1002,1416',
  '1232,80 1188,217 1352,348 1327,368 1258,506 1247,592 1280,652 1189,647 1280,718 1262,778 1181,748 1126,738 1046,829 718,748 820,794 885,824 810,1041 714,1178 561,1441',
  '167,52 550,222 648,212 641,1452 1119,1497',
  '189,647 338,845 583,1032 572,1052 1020,834 1349,688 1428,763 1031,1199'];
stations.forEach((str, s) => points(s, str).forEach(([x, y]) => out.push(`<rect x="${x - 4}" y="${y - 4}" width="8" height="8" fill="#7a80b5"/>`)));
[[0, '72,1328'], [2, '911,456'], [2, '1170,424']].forEach(([s, p]) => { const [x, y] = toMap(s, p); out.push(`<path d="M${x - 8} ${y + 6}h16l-8-14z" fill="#d08f55"/>`); });

// Route shields
out.push('<rect x="1216" y="61" width="67" height="34" rx="3" fill="#f5d5cb" stroke="#e0a596" stroke-width="2"/>');
out.push('<rect x="1003" y="405" width="66" height="57" rx="3" fill="#ebccd3" stroke="#d68fa0" stroke-width="2"/>');

// Labels: kind, centre and text, with an optional turn in degrees
function label(kind, s, x, y, text, turn) {
  const size = { exit: 20, capital: 30, metro: 28, city: 26, town: 22, county: 20, place: 20, nature: 22, shield: 22 }[kind];
  const [cx, cy] = toMap(s, x + ',' + y);
  out.push(`<text class="label ${kind}" x="${cx}" y="${cy + Math.round(size * .36)}"${turn ? ` transform="rotate(${turn} ${cx} ${cy})"` : ''}>${text}</text>`);
}
const exits = [
  '1320,80,14|903,232,144|884,295,144|843,398,143|756,563,143B|686,670,143|203,751,50A|598,814,142A|591,877,142C|474,890,52|723,887,54|897,707,55|1007,740,56|582,960,142A|513,1036,141|328,1226,139B|283,1292,139A|238,1428,138|1183,868,57|1261,834,58A-B|1466,840,58B|1528,1053,14-14C',
  '277,55,17A|375,40,15W|233,138,17A|57,206,16|311,405,15E|259,507,15E|219,574,14-14C|201,665,14-14C|34,837,14A-C;|38,895,14|952,944,14B|916,1010,14B|611,1297,14A',
  '429,100,8|397,172,9|363,302,7|394,480,7|361,620,5|12,624,4|343,731,4|299,818,3|126,855,2|67,904,2|151,1012,28A|293,1095,29|464,1114,30|513,970,31|566,818,32|645,684,32B|798,542,34|828,311,15|922,316,35W;|922,377,35E|1133,524,17W|1121,286,39|1184,213,39W|1181,42,40|1300,487,19|1504,987,4|1560,982,5|1461,1077,4|1377,1175,3|1283,1206,2|1244,1258,2|1190,1377,1|55,1410,26|77,1486,26',
  '148,98,9P|165,161,10W-E|293,45,12A|288,129,12B|317,189,22B|189,254,22B|275,271,11|121,303,22A-E|35,342,19|283,352,12A|209,401,11|467,251,24|596,281,24|645,289,25|781,248,25|837,223,26|1012,120,27S; 28|988,180,27N|989,254,3|1006,321,2|1063,448,2|1175,479,21|1228,407,22|1303,286,23|1353,118,29E;|1353,177,29W|1435,48,24|1459,256,28B|1480,319,28A|1485,417,28A|1476,483,27W|1462,600,27|1442,668,26D|1427,807,26B|1438,871,26B|1440,972,26A|1442,1127,25B|1445,1217,25A|1451,1343,25B|1400,1468,24B|1150,542,1|1078,527,21|1018,520,20B|926,574,19|864,640,19|728,674,18|517,724,16|441,701,15|335,692,13S-W|268,536,12|291,598,11E-W|376,587,11|427,797,10|250,836,6|205,873,6|466,888,8|500,1010,5|540,1145,4|571,1241,4|586,1295,3|621,1414,3|631,1462,2|1230,30,31S|1520,1278,19|1380,1525,24B|655,1535,1W'];
exits.forEach((str, s) => str.split('|').forEach(l => { const [x, y, t] = l.split(','); label('exit', s, x, y, t); }));
label('nature', 0, 122, 62, 'South Mountain');
label('nature', 0, 125, 123, 'Reservation');
label('town', 0, 392, 108, 'South Orange');
label('city', 0, 1532, 127, 'Harrison');
label('metro', 0, 1361, 338, 'Newark');
label('city', 0, 697, 404, 'Irvington');
label('city', 0, 287, 427, 'Maplewood');
label('city', 0, 748, 1009, 'Hillside');
label('city', 0, 396, 1081, 'Union');
label('town', 0, 122, 1496, 'Kenilworth');
label('county', 0, 230, 596, 'Essex County', 22);
label('place', 0, 1497, 1284, 'Port Newark/');
label('place', 0, 1497, 1344, 'Elizabeth');
label('place', 0, 1497, 1405, 'Marine');
label('place', 0, 1497, 1465, 'Terminal');
label('county', 1, 215, 312, 'Essex County', -28);
label('shield', 1, 730, 203, 'NJ 7');
label('shield', 1, 338, 1067, 'I 78');
label('shield', 1, 338, 1127, 'NJTP');
label('city', 1, 1297, 190, 'Hoboken');
label('metro', 1, 816, 494, 'Jersey City');
label('town', 1, 1070, 26, 'Jersey City');
label('capital', 2, 26, 784, 'New York');
label('place', 2, 22, 32, 'West 30th');
label('place', 2, 22, 88, 'Street Heliport');
label('town', 3, 692, 67, 'Queens');

document.getElementById('map-layers').innerHTML = out.join('');
```
